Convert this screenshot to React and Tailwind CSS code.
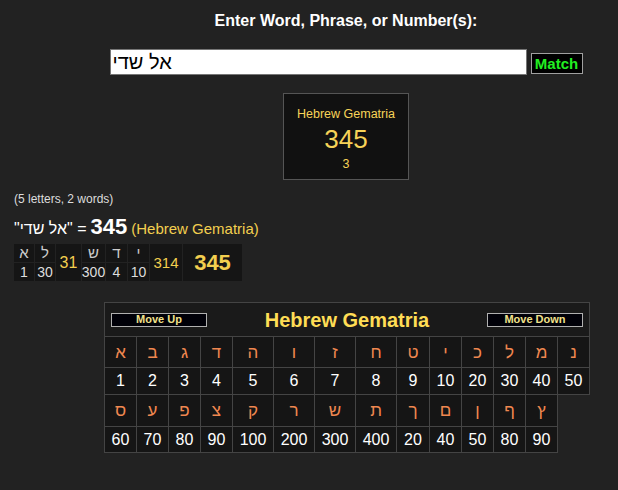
import React from "react";

const row1 = ["א","ב","ג","ד","ה","ו","ז","ח","ט","י","כ","ל","מ","נ"];
const row2 = [1,2,3,4,5,6,7,8,9,10,20,30,40,50];
const row3 = ["ס","ע","פ","צ","ק","ר","ש","ת","ך","ם","ן","ף","ץ"];
const row4 = [60,70,80,90,100,200,300,400,20,40,50,80,90];
const colW = ["w-[32px]","w-[32px]","w-[32px]","w-[32px]","w-[41px]","w-[41px]","w-[41px]","w-[41px]","w-[33px]","w-[32px]","w-[32px]","w-[32px]","w-[32px]","w-[32px]"];

export default function App() {
  return (
    <div className="min-h-[490px] w-[618px] bg-[#222222] font-['Liberation_Sans',Arial,sans-serif] text-white">
      <div className="flex flex-col items-center pl-[74px] pt-[12px]">
        <div className="text-[16px] font-bold leading-[18px] text-white">Enter Word, Phrase, or Number(s):</div>
        <div className="mt-[19px] flex items-center">
          <input
            readOnly
            value="אל שדי"
            className="h-[26px] w-[417px] border border-[#767676] bg-white px-[2px] text-[20px] leading-[24px] text-black outline-none"
          />
          <div className="ml-[4px] mt-[2px] flex h-[21px] w-[52px] items-center justify-center border border-[#a0a0a0] bg-black text-[15px] font-bold leading-none text-[#22ee22]">Match</div>
        </div>
        <div className="mt-[18px] flex h-[87px] w-[126px] flex-col items-center border border-[#555555] bg-[#111111] pt-[12px] text-[#f7d358]">
          <div className="text-[12.5px] leading-[16px]">Hebrew Gematria</div>
          <div className="mt-[2px] text-[26px] leading-[30px]">345</div>
          <div className="mt-[3px] text-[12.5px] leading-[14px]">3</div>
        </div>
      </div>

      <div className="pl-[14px]">
        <div className="mt-[12px] text-[12px] leading-[14px] text-[#dddddd]">(5 letters, 2 words)</div>
        <div className="mt-[9px] flex items-baseline leading-[24px]">
          <span className="text-[16px] text-white">"אל שדי" = </span>
          <span className="ml-[4px] text-[22px] font-bold text-white">345</span>
          <span className="ml-[4px] text-[15px] text-[#f3cf4f]">(Hebrew Gematria)</span>
        </div>
        <div className="mt-[3px] inline-grid grid-cols-[20px_20px_25px_23px_21px_21px_32px_59px] grid-rows-[18px_18px] gap-px bg-[#222222] text-[14px]">
          <div className="col-start-1 row-start-1 flex items-center justify-center bg-[#151515] text-[15px] text-[#cccccc]">א</div>
          <div className="col-start-2 row-start-1 flex items-center justify-center bg-[#151515] text-[15px] text-[#cccccc]">ל</div>
          <div className="col-start-3 row-start-1 row-span-2 flex items-center justify-center bg-[#151515] text-[16px] text-[#f3cf4f]">31</div>
          <div className="col-start-4 row-start-1 flex items-center justify-center bg-[#151515] text-[15px] text-[#cccccc]">ש</div>
          <div className="col-start-5 row-start-1 flex items-center justify-center bg-[#151515] text-[15px] text-[#cccccc]">ד</div>
          <div className="col-start-6 row-start-1 flex items-center justify-center bg-[#151515] text-[15px] text-[#cccccc]">י</div>
          <div className="col-start-7 row-start-1 row-span-2 flex items-center justify-center bg-[#151515] text-[15px] text-[#f3cf4f]">314</div>
          <div className="col-start-8 row-start-1 row-span-2 flex items-center justify-center bg-[#151515] text-[22px] font-bold text-[#f3cf4f]">345</div>
          <div className="col-start-1 row-start-2 flex items-center justify-center bg-[#151515] text-[#dddddd]">1</div>
          <div className="col-start-2 row-start-2 flex items-center justify-center bg-[#151515] text-[#dddddd]">30</div>
          <div className="col-start-4 row-start-2 flex items-center justify-center bg-[#151515] text-[#dddddd]">300</div>
          <div className="col-start-5 row-start-2 flex items-center justify-center bg-[#151515] text-[#dddddd]">4</div>
          <div className="col-start-6 row-start-2 flex items-center justify-center bg-[#151515] text-[#dddddd]">10</div>
        </div>
      </div>

      <div className="ml-[104px] mt-[21px]">
        <table className="table-fixed border-collapse">
          <colgroup>
            {colW.map((w, i) => <col key={i} className={w} />)}
          </colgroup>
          <tbody>
            <tr>
              <td colSpan={14} className="h-[34px] border border-[#444444] bg-[#1a1a1a] px-[6px]">
                <div className="flex items-center justify-between">
                  <div className="flex h-[14px] w-[96px] items-center justify-center border border-[#b0b0b0] bg-[#000008] text-[11px] font-bold leading-none text-[#f0e08a]">Move Up</div>
                  <div className="text-[20px] font-bold leading-[24px] text-[#ffdd55]">Hebrew Gematria</div>
                  <div className="flex h-[14px] w-[96px] items-center justify-center border border-[#b0b0b0] bg-[#000008] text-[11px] font-bold leading-none text-[#f0e08a]">Move Down</div>
                </div>
              </td>
            </tr>
            <tr>
              {row1.map((c, i) => (
                <td key={i} className="h-[31px] border border-[#444444] bg-[#151515] p-0 text-center text-[17px] text-[#f08850]">{c}</td>
              ))}
            </tr>
            <tr>
              {row2.map((c, i) => (
                <td key={i} className="h-[27px] border border-[#444444] bg-[#151515] p-0 text-center text-[16px] text-white">{c}</td>
              ))}
            </tr>
            <tr>
              {row3.map((c, i) => (
                <td key={i} className="h-[32px] border border-[#444444] bg-[#151515] p-0 text-center text-[17px] text-[#f08850]">{c}</td>
              ))}
            </tr>
            <tr>
              {row4.map((c, i) => (
                <td key={i} className="h-[26px] border border-[#444444] bg-[#151515] p-0 text-center text-[16px] text-white">{c}</td>
              ))}
            </tr>
          </tbody>
        </table>
      </div>
    </div>
  );
}
